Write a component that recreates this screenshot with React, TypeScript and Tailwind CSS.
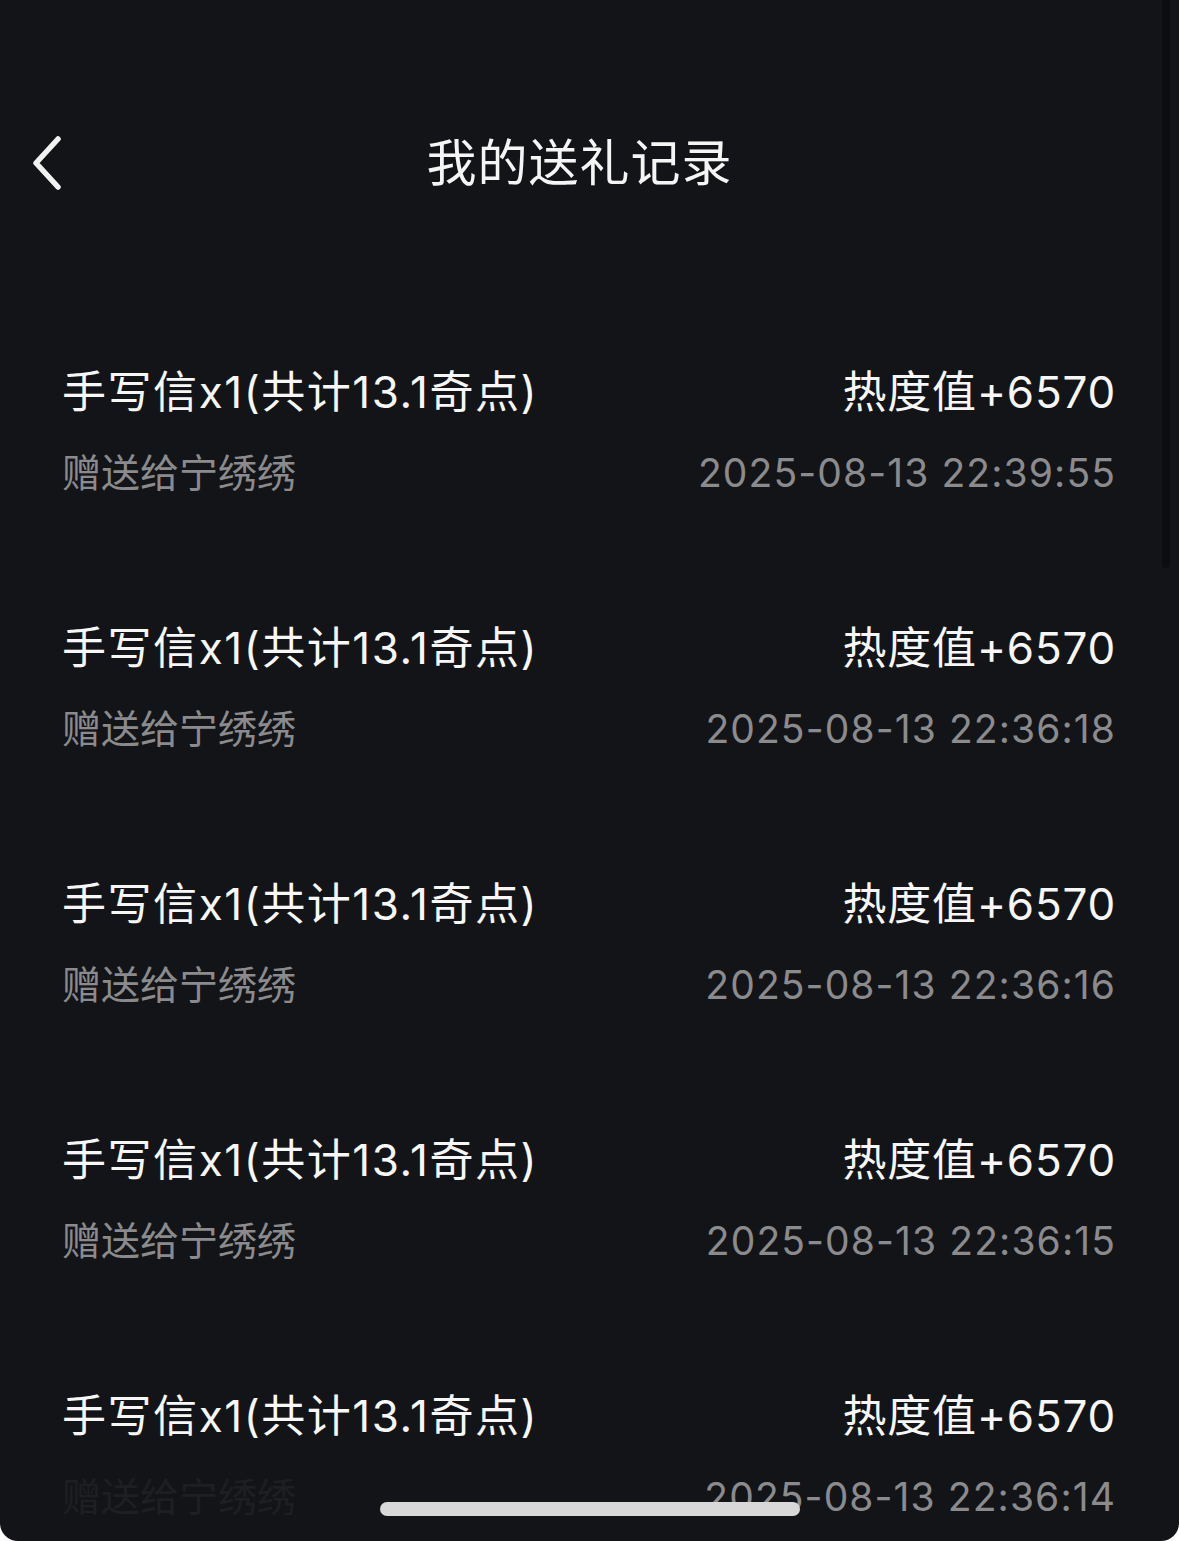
const records = [
  { time: '2025-08-13 22:39:55' },
  { time: '2025-08-13 22:36:18' },
  { time: '2025-08-13 22:36:16' },
  { time: '2025-08-13 22:36:15' },
  { time: '2025-08-13 22:36:14', faded: true },
];

export default function App() {
  return (
    <div className="w-full h-[1541px] bg-white font-['Inter','Noto_Sans_CJK_SC',sans-serif]">
      <div className="relative h-full bg-[#131417] rounded-b-[18px] overflow-hidden">
        {/* Scroll indicator */}
        <div className="absolute right-[9px] top-0 w-[8px] h-[568px] rounded-b-full bg-[#0c0d0f]" />

        {/* Header */}
        <div className="mt-[98px] h-[130px] grid grid-cols-[1fr_auto_1fr] items-center">
          <div className="pl-[32px] flex items-center">
            <svg width="30" height="54" viewBox="0 0 30 54" fill="none">
              <path
                d="M26 3 L4 27 L26 51"
                stroke="#f2f2f2"
                strokeWidth="5.5"
                strokeLinecap="round"
                strokeLinejoin="round"
              />
            </svg>
          </div>
          <h1 className="mr-[20px] text-[50px] leading-[60px] font-normal tracking-[1px] text-[#f5f5f5]">
            我的送礼记录
          </h1>
          <div />
        </div>

        {/* Records */}
        <div className="mt-[75px] pl-[62px] pr-[63px]">
          {records.map((r, idx) => (
            <div key={idx} className="h-[256px] pt-[63px] flex justify-between">
              <div className="flex flex-col">
                <span className="text-[44px] leading-[52px] tracking-[1.55px] text-[#f7f7f7]">
                  手写信x1(共计13.1奇点)
                </span>
                <span
                  className={`mt-[32px] text-[39px] leading-[46px] ${
                    r.faded ? 'text-[#1e1f22]' : 'text-[#8b8b8e]'
                  }`}
                >
                  赠送给宁绣绣
                </span>
              </div>
              <div className="flex flex-col items-end">
                <span className="text-[44px] leading-[52px] tracking-[0.8px] text-[#f7f7f7]">热度值+6570</span>
                <span className="mt-[32px] text-[39px] leading-[46px] tracking-[1.1px] text-[#8b8b8e]">
                  {r.time}
                </span>
              </div>
            </div>
          ))}
        </div>

        {/* Home indicator */}
        <div className="absolute left-[380px] bottom-[25px] w-[420px] h-[14px] rounded-full bg-[#d8d8d8]" />
      </div>
    </div>
  );
}
